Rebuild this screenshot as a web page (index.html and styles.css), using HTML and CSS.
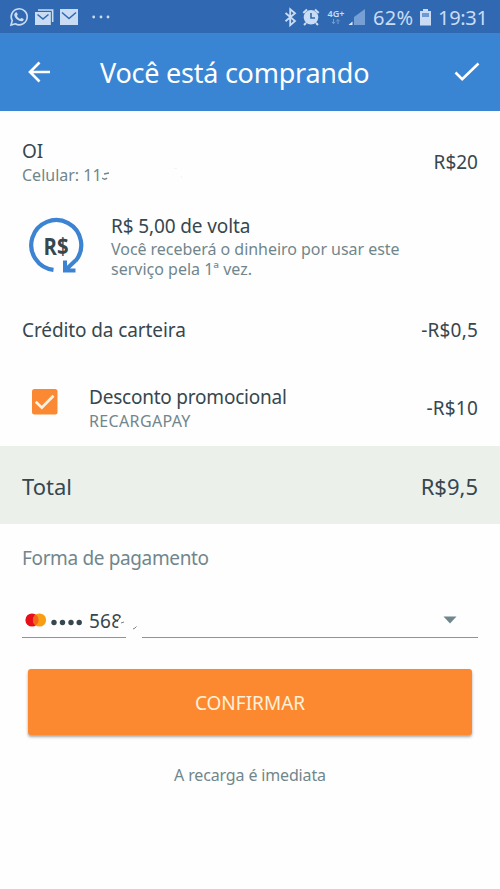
FILE: index.html
```html
<!DOCTYPE html>
<html lang="pt-BR">
<head>
<meta charset="utf-8">
<title>Você está comprando</title>
<link rel="stylesheet" href="styles.css">
</head>
<body>
<div class="status">
  <svg class="status-left" width="120" height="33" viewBox="0 0 120 33">
    <g fill="none" stroke="#c9dcf4" stroke-width="1.6"><path d="M11 25l1.2-4.3a8 8 0 1 1 3.1 3.1z"/></g>
    <path d="M15.6 12.4c.8-.5 1.3-.2 1.6.7l.5 1.3c.1.6-.8 1.1-.7 1.5.7 1.4 1.7 2.3 3.1 2.9.6.1 1-1.1 1.6-.9l1.6.8c.6.3.4 1.2 0 1.7-1 1.3-2.6 1-4 .4-2.500-1-4.200-3-4.900-5-.4-1.400.2-2.800 1.200-3.400z" fill="#c9dcf4"/>
    <path d="M38 10H52.600V22" fill="none" stroke="#c9dcf4" stroke-width="1.700"/>
    <path d="M35 12h16v13H35zM60 9h18v16H60z" fill="#c9dcf4"/>
    <path d="M51.300 11.700V25M35 11.500h16" stroke="#3069b2" stroke-width=".8"/>
    <path d="M37.500 14.500l5.500 4.500 5.500-4.500M62 12.500l7 6 7-6" fill="none" stroke="#3069b2" stroke-width="1.500"/>
    <g fill="#c9dcf4"><circle cx="93.700" cy="17" r="1.400"/><circle cx="101" cy="17" r="1.400"/><circle cx="108" cy="17" r="1.400"/></g>
  </svg>
  <div class="status-right">
    <svg width="38" height="33" viewBox="284 0 38 33">
      <path d="M285.500 13l9.500 8-4.800 4.300V9.200l4.800 4-9.500 8" fill="none" stroke="#c9dcf4" stroke-width="1.800"/>
      <circle cx="311" cy="17.300" r="7.300" fill="#c9dcf4"/>
      <path d="M303.300 13l3.700-3.500M318.700 13l-3.700-3.500M306 23l-2 2M316 23l2 2" stroke="#c9dcf4" stroke-width="2"/>
      <path d="M311 13V18h4" fill="none" stroke="#3069b2" stroke-width="1.600"/>
    </svg>
    <div class="net"><span class="net-name">4G+</span>
      <svg width="10" height="6" viewBox="0 0 10 6"><path d="M2.500 0v4M.8 2.800l1.700 2 1.700-2M7 5V1M5.300 2.200L7 .5l1.700 1.700" fill="none" stroke="#759fd5"/></svg>
    </div>
    <svg class="signal" width="18" height="33" viewBox="349 0 18 33"><path d="M366 9v16h-11v-8z" fill="#759fd5"/><path d="M349.500 25l4-3.500V25z" fill="#e1edfb"/></svg>
    <span class="percent">62%</span>
    <svg class="battery" width="13" height="33" viewBox="419 0 13 33"><path d="M423 9h5v2h3v14.500h-11V11h3z" fill="#c9dcf4"/><path d="M422 13h7v4h-7z" fill="#6f99d0"/></svg>
    <span class="clock">19:31</span>
  </div>
</div>
<header class="bar">
  <svg width="24" height="24" viewBox="0 0 24 24"><path d="M23 12H3M12.500 2.500L3 12l9.500 9.500" fill="none" stroke="#fff" stroke-width="2.600"/></svg>
  <h1 class="title">Você está comprando</h1>
  <svg class="done" width="26" height="20" viewBox="0 0 26 20"><path d="M1.500 10.500l6.700 6.700L24.500 1.500" fill="none" stroke="#fff" stroke-width="2.600"/></svg>
</header>
<main>
  <section class="row item">
    <div class="grow"><div class="main-text oi">OI</div><div class="sub-text phone">Celular: 11<svg width="90" height="14" viewBox="0 0 90 14"><path d="M0 10q3 2.500 5 0M2 6l5-1" fill="none" stroke="#6f858b" stroke-width="1.300"/><path d="M72 0h3M79 9h1" stroke="#e5e8e8"/></svg></div></div>
    <span class="main-text price20">R$20</span>
  </section>
  <section class="row cashback">
    <svg class="coin" width="58" height="58" viewBox="26 216 58 58">
      <path d="M52.500 269.900A25 25 0 1 1 74.500 261" fill="none" stroke="#3c83d1" stroke-width="4.200"/>
      <path d="M74.500 270.500H64V260.500M64.500 270l10-9.500" fill="none" stroke="#3c83d1" stroke-width="4"/>
      <text class="coin-text" x="42.500" y="254.500" textLength="25" lengthAdjust="spacingAndGlyphs">R$</text>
    </svg>
    <div><div class="main-text back">R$ 5,00 de volta</div><div class="sub-text l1">Você receberá o dinheiro por usar este</div><div class="sub-text l2">serviço pela 1ª vez.</div></div>
  </section>
  <section class="row credit"><span class="main-text grow wallet">Crédito da carteira</span><span class="main-text price05">-R$0,5</span></section>
  <section class="row promo">
    <svg class="check" width="26" height="26" viewBox="0 0 26 26"><rect width="25.500" height="25.500" rx="2.500" fill="#fb8933"/><path d="M3.800 12.800l6 5.800L21.500 6.800" fill="none" stroke="#fff4e4" stroke-width="2.700"/></svg>
    <div class="grow"><div class="main-text desc">Desconto promocional</div><div class="sub-text brand">RECARGAPAY</div></div>
    <span class="main-text price10">-R$10</span>
  </section>
  <section class="row total"><span class="grow total-name">Total</span><span class="total-price">R$9,5</span></section>
  <section class="payment">
    <div class="main-text method">Forma de pagamento</div>
    <div class="select">
      <svg class="mc" width="60" height="20" viewBox="0 0 60 20"><circle cx="10" cy="10" r="6.600" fill="#e60f18"/><circle cx="17.500" cy="10" r="6.600" fill="#f99d12"/><path d="M13.750 4.600a6.600 6.600 0 0 1 0 10.800a6.600 6.600 0 0 1 0-10.800z" fill="#f3651a"/><g fill="#36474f"><circle cx="32" cy="12.500" r="2.700"/><circle cx="40.500" cy="12.500" r="2.700"/><circle cx="49" cy="12.500" r="2.700"/><circle cx="57.200" cy="12.500" r="2.700"/></g></svg>
      <span class="main-text digits">568<svg class="smudge" width="30" height="36" viewBox="114 602 30 36"><path d="M125 609l-1 5-5 4-2 5 3 7h8v-21z" fill="#fefefe"/><path d="M121 622l3-1M133 628q2-.5 3.500-2.500" fill="none" stroke="#718188"/><path d="M126 634h16v4h-16z" fill="#fefefe"/></svg></span>
      <svg class="caret" width="14" height="8" viewBox="0 0 14 8"><path d="M.5.500h13L7 7.500z" fill="#6f868c"/></svg>
    </div>
  </section>
  <button class="confirm"><span>CONFIRMAR</span></button>
  <p class="sub-text note"><span>A recarga é imediata</span></p>
</main>
</body>
</html>
```
FILE: styles.css
```css
* { box-sizing: border-box; }
body { margin: 0; width: 500px; height: 889px; overflow: hidden; background: #fefefe; font-family: "Noto Sans", sans-serif; color: #36474f; white-space: nowrap; }
svg { display: block; flex: none; }
.status { height: 33px; background: #3069b2; color: #c9dcf4; display: flex; justify-content: space-between; }
.status-right { display: flex; width: 216px; align-items: center; }
.net { width: 20px; margin-left: 4px; display: flex; flex-direction: column; align-items: center; }
.net-name { font-size: 9px; line-height: 11px; font-weight: 600; }
.signal { margin-left: 2px; }
.percent, .clock { font-size: 20px; line-height: 34px; margin-top: 3px; }
.percent { width: 42px; margin-left: 7px; letter-spacing: .3px; }
.battery { margin-left: 4px; }
.clock { margin-left: 6px; letter-spacing: -.3px; }
.bar { height: 78px; background: #3985d3; color: #fff; display: flex; align-items: center; padding: 0 20px 0 27px; }
.title { margin: 0 0 0 49px; font-size: 27px; font-weight: 400; line-height: 78px; flex: 1; letter-spacing: -.24px; padding-top: 2px; }
.row { display: flex; align-items: center; padding: 0 22px; }
.grow { flex: 1; }
.main-text { font-size: 19px; line-height: 26px; }
.sub-text { font-size: 16px; line-height: 20px; color: #71868c; }
.item { height: 102px; }
.oi { margin-top: -2px; }
.phone { display: flex; align-items: center; margin-top: 1px; }
.cashback { height: 69px; align-items: flex-start; }
.coin { margin-left: 5px; margin-top: 3px; }
.coin-text { font: 700 24px "Open Sans", "Noto Sans", sans-serif; fill: #36474f; }
.cashback > div { margin-left: 26px; }
.back { letter-spacing: -.12px; }
.l1 { letter-spacing: -.04px; }
.credit { height: 96px; }
.wallet { letter-spacing: -.1px; }
.price05, .price10 { letter-spacing: .2px; }
.promo { height: 68px; align-items: flex-start; }
.desc { letter-spacing: -.22px; }
.brand { letter-spacing: .35px; margin-top: 1px; }
.check { margin: 11px 31px 0 10px; }
.price10 { margin-top: 17px; }
.promo .grow { margin-top: 6px; }
.total { height: 78px; background: #ebf0eb; font-size: 22px; padding-top: 1px; }
.payment { padding: 21px 22px 0; height: 145px; }
.method { color: #71868c; letter-spacing: -.36px; }
.select { height: 67px; display: flex; align-items: flex-end; border-bottom: 1.500px solid #8399a1; position: relative; }
.mc { margin-bottom: 7px; }
.digits { position: relative; margin: 0 auto 3px 7px; letter-spacing: .2px; }
.smudge { position: absolute; left: 25px; bottom: -5px; }
.caret { margin: 0 21px 13px 0; }
.confirm { display: block; width: 444px; height: 66px; margin: 0 28px; border: 0; border-radius: 3px; background: #fc8930; color: #fff1da; font: 400 19px "Noto Sans", sans-serif; box-shadow: 0 2px 3px rgba(0,0,0,.35); padding-top: 3px; }
.note { margin: 30px 0 0; text-align: center; letter-spacing: -.15px; }
```
